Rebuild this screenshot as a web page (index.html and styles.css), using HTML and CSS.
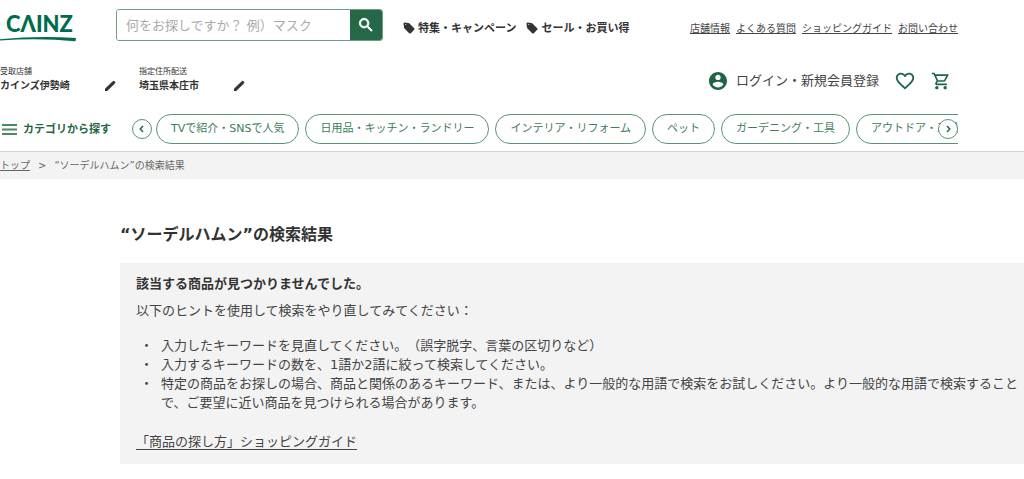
FILE: index.html
```html
<!DOCTYPE html>
<html lang="ja">
<head>
<meta charset="utf-8">
<meta name="viewport" content="width=device-width, initial-scale=1">
<title>“ソーデルハムン”の検索結果 | CAINZ</title>
<link rel="stylesheet" href="styles.css">
</head>
<body>
<header class="header">
  <div class="top-row">
    <a class="logo" href="#" aria-label="CAINZ">
      <svg viewBox="0 0 76 38" width="76" height="38" aria-hidden="true">
        <text class="logo-text" x="6" y="26">CΛINZ</text>
        <path d="M0 33.300Q38 29.500 76 32L75.500 35.300Q38 31.500 0 34.600Z"/>
      </svg>
    </a>
    <form class="search" role="search">
      <input class="search-input" type="search" aria-label="商品を検索" placeholder="何をお探しですか？ 例）マスク">
      <button class="search-button" type="button" aria-label="検索">
        <svg viewBox="0 0 24 24" width="18" height="18" aria-hidden="true"><path d="M15.500 14h-.79l-.28-.27A6.471 6.471 0 0 0 16 9.500 6.500 6.500 0 1 0 9.500 16c1.610 0 3.090-.59 4.230-1.570l.27.28v.79l5 4.990L20.490 19l-4.990-5zm-6 0C7.010 14 5 11.990 5 9.500S7.010 5 9.500 5 14 7.010 14 9.500 11.990 14 9.500 14z"/></svg>
      </button>
    </form>
    <nav class="promo" aria-label="特集">
      <a class="promo-link" href="#"><svg viewBox="0 0 12 12" width="12" height="12" aria-hidden="true"><path fill-rule="evenodd" d="M1.500.5 5.500 1Q6 1 6.500 1.500L11.200 6.200Q11.900 7 11.200 7.700L7.800 11.200Q7 11.900 6.200 11.200L1.500 6.500Q1 6 1 5.500L.5 1.500Q.5.5 1.500.5ZM2.800 2a.5.5 0 1 0 .01 0Z"/></svg>特集・キャンペーン</a>
      <a class="promo-link" href="#"><svg viewBox="0 0 12 12" width="12" height="12" aria-hidden="true"><path fill-rule="evenodd" d="M1.500.5 5.500 1Q6 1 6.500 1.500L11.200 6.200Q11.900 7 11.200 7.700L7.800 11.200Q7 11.900 6.200 11.200L1.500 6.500Q1 6 1 5.500L.5 1.500Q.5.5 1.500.5ZM2.800 2a.5.5 0 1 0 .01 0Z"/></svg>セール・お買い得</a>
    </nav>
    <nav class="utility" aria-label="サポート">
      <a href="#">店舗情報</a>
      <a href="#">よくある質問</a>
      <a href="#">ショッピングガイド</a>
      <a href="#">お問い合わせ</a>
    </nav>
  </div>

  <div class="store-row">
    <div class="store">
      <div>
        <p class="store-label">受取店舗</p>
        <p class="store-name">カインズ伊勢崎</p>
      </div>
      <button class="icon-button" type="button" aria-label="受取店舗を変更"><svg viewBox="0 0 12 12" width="12" height="12" aria-hidden="true"><path d="M1 8.700 7.700 2.300 9.900 4.400 3.200 10.900H1ZM7.700 2.300 9.200 1Q9.700.6 10.200 1L11.200 2Q11.600 2.500 11.200 3L9.900 4.400Z"/></svg></button>
    </div>
    <div class="store">
      <div>
        <p class="store-label">指定住所配送</p>
        <p class="store-name">埼玉県本庄市</p>
      </div>
      <button class="icon-button" type="button" aria-label="配送先を変更"><svg viewBox="0 0 12 12" width="12" height="12" aria-hidden="true"><path d="M1 8.700 7.700 2.300 9.900 4.400 3.200 10.900H1ZM7.700 2.300 9.200 1Q9.700.6 10.200 1L11.200 2Q11.600 2.500 11.200 3L9.900 4.400Z"/></svg></button>
    </div>
    <div class="account">
      <a class="login" href="#"><svg viewBox="2 2 20 20" width="18" height="18" aria-hidden="true"><path d="M12 2C6.480 2 2 6.480 2 12s4.480 10 10 10 10-4.480 10-10S17.520 2 12 2zm0 3c1.660 0 3 1.340 3 3s-1.340 3-3 3-3-1.340-3-3 1.340-3 3-3zm0 14.200c-2.500 0-4.710-1.280-6-3.220.03-1.990 4-3.080 6-3.080 1.990 0 5.970 1.090 6 3.080-1.290 1.940-3.500 3.220-6 3.220z"/></svg>ログイン・新規会員登録</a>
      <a class="icon-link" href="#" aria-label="お気に入り"><svg viewBox="0 0 24 24" width="22" height="22" aria-hidden="true"><path d="M16.500 3c-1.740 0-3.410.81-4.500 2.090C10.910 3.810 9.240 3 7.500 3 4.420 3 2 5.420 2 8.500c0 3.780 3.400 6.860 8.550 11.540L12 21.350l1.450-1.320C18.600 15.360 22 12.280 22 8.500 22 5.420 19.580 3 16.500 3zm-4.400 15.550-.1.1-.1-.1C7.140 14.240 4 11.390 4 8.500 4 6.500 5.500 5 7.500 5c1.540 0 3.040.99 3.570 2.360h1.870C13.460 5.990 14.960 5 16.500 5c2 0 3.500 1.500 3.500 3.500 0 2.890-3.140 5.740-7.900 10.050z"/></svg></a>
      <a class="icon-link" href="#" aria-label="カート"><svg viewBox="0 0 24 24" width="20" height="20" aria-hidden="true"><path d="M15.550 13c.75 0 1.410-.41 1.750-1.030l3.580-6.490A.996.996 0 0 0 20.010 4H5.210l-.94-2H1v2h2l3.600 7.590-1.350 2.440C4.520 15.370 5.480 17 7 17h12v-2H7l1.100-2h7.450zM6.160 6h12.150l-2.760 5H8.530L6.160 6zM7 18c-1.100 0-1.990.9-1.990 2S5.900 22 7 22s2-.9 2-2-.9-2-2-2zm10 0c-1.100 0-1.990.9-1.990 2s.89 2 1.990 2 2-.9 2-2-.9-2-2-2z"/></svg></a>
    </div>
  </div>

  <div class="category-row">
    <button class="category-menu" type="button"><svg viewBox="0 0 15 11" width="15" height="11" aria-hidden="true"><path d="M0 0h15v2H0ZM0 4.500h15v2H0ZM0 9h15v2H0Z"/></svg>カテゴリから探す</button>
    <div class="carousel">
      <button class="arrow" type="button" aria-label="前へ"><svg viewBox="0 0 8 8" width="8" height="8" aria-hidden="true"><path d="M5 1 2.200 4 5 7"/></svg></button>
      <nav class="pills" aria-label="カテゴリ">
        <a class="pill" href="#">TVで紹介・SNSで人気</a>
        <a class="pill" href="#">日用品・キッチン・ランドリー</a>
        <a class="pill" href="#">インテリア・リフォーム</a>
        <a class="pill" href="#">ペット</a>
        <a class="pill" href="#">ガーデニング・工具</a>
        <a class="pill" href="#">アウトドア・工具</a>
      </nav>
      <button class="arrow arrow-next" type="button" aria-label="次へ"><svg viewBox="0 0 8 8" width="8" height="8" aria-hidden="true"><path d="M3 1 5.800 4 3 7"/></svg></button>
    </div>
  </div>
</header>

<nav class="breadcrumb" aria-label="パンくず">
  <a href="#">トップ</a>
  <span>&gt;</span>
  <span>“ソーデルハムン”の検索結果</span>
</nav>

<main class="main">
  <h1 class="title">“ソーデルハムン”の検索結果</h1>
  <section class="notice">
    <h2 class="notice-title">該当する商品が見つかりませんでした。</h2>
    <p class="notice-lead">以下のヒントを使用して検索をやり直してみてください：</p>
    <ul class="hints">
      <li>入力したキーワードを見直してください。（誤字脱字、言葉の区切りなど）</li>
      <li>入力するキーワードの数を、1語か2語に絞って検索してください。</li>
      <li>特定の商品をお探しの場合、商品と関係のあるキーワード、または、より一般的な用語で検索をお試しください。より一般的な用語で検索することで、ご要望に近い商品を見つけられる場合があります。</li>
    </ul>
    <a class="guide-link" href="#">「商品の探し方」ショッピングガイド</a>
  </section>
</main>
</body>
</html>
```

FILE: styles.css
```css
* {
  box-sizing: border-box;
}

body {
  margin: 0;
  background: #fff;
  color: #333;
  font-family: "DejaVu Sans", "Noto Sans CJK JP", sans-serif;
  font-size: 13px;
  line-height: 19px;
  text-spacing-trim: space-all;
}

p, h1, h2, ul {
  margin: 0;
  padding: 0;
}

a {
  color: inherit;
}

svg {
  display: block;
  flex: none;
  fill: currentColor;
}

button {
  display: flex;
  align-items: center;
  justify-content: center;
  padding: 0;
  border: 0;
  background: none;
  color: inherit;
  font: inherit;
  cursor: pointer;
}

.header {
  padding: 6px 66px 7px 0;
  border-bottom: 1px solid #d4d4d4;
}

.top-row {
  display: flex;
  align-items: center;
}

.logo {
  margin-right: 40px;
  color: #006c4b;
}

.logo-text {
  font-family: Lato, sans-serif;
  font-size: 22px;
  font-weight: 900;
}

.search {
  display: flex;
  width: 267px;
  height: 32px;
  border: 1px solid #6c9f84;
  border-radius: 3px;
  overflow: hidden;
}

.search-input {
  flex: 1;
  min-width: 0;
  padding: 0 9px;
  border: 0;
  background: #fff;
  font: inherit;
}

.search-input::placeholder {
  color: #aaa;
}

.search-button {
  width: 32px;
  background: #266747;
  color: #fff;
}

.search-button svg {
  stroke: currentColor;
}

.promo {
  display: flex;
  gap: 10px;
  margin-left: 20px;
  padding-top: 6px;
}

.promo-link {
  display: flex;
  align-items: center;
  gap: 3px;
  font-size: 11px;
  font-weight: 700;
  text-decoration: none;
  white-space: nowrap;
}

.utility {
  display: flex;
  gap: 6px;
  margin-left: auto;
  padding-top: 7px;
  color: #444;
  font-size: 10px;
  white-space: nowrap;
}

.store-row {
  display: flex;
  align-items: center;
  margin-top: 21px;
}

.store {
  display: flex;
  align-items: flex-end;
  justify-content: space-between;
  width: 116px;
  margin-right: 23px;
}

.store + .store {
  width: 106px;
}

.store-label {
  font-size: 8px;
  line-height: 14px;
}

.store-name {
  font-size: 10px;
  font-weight: 700;
  line-height: 13px;
}

.account {
  display: flex;
  align-items: center;
  margin-left: auto;
  padding: 4px 7px 0 0;
}

.login {
  display: flex;
  align-items: center;
  gap: 9px;
  color: #444;
  text-decoration: none;
}

.login svg,
.icon-link {
  color: #1f6545;
}

.icon-link {
  margin-left: 15px;
}

.category-row {
  display: flex;
  align-items: center;
  margin-top: 22px;
  color: #266747;
}

.category-menu {
  flex: none;
  gap: 6px;
  margin: 0 21px 0 2px;
  font-size: 11px;
  font-weight: 700;
}

.category-menu svg {
  color: #4a8868;
}

.carousel {
  position: relative;
  display: flex;
  flex: 1;
  align-items: center;
  gap: 4px;
  min-width: 0;
}

.arrow {
  flex: none;
  width: 20px;
  height: 20px;
  border: 1px solid #5c9377;
  border-radius: 50%;
  background: #fff;
}

.arrow svg {
  fill: none;
  stroke: currentColor;
  stroke-width: 1.5;
}

.arrow-next {
  position: absolute;
  right: 0;
}

.pills {
  display: flex;
  flex: 1;
  gap: 6px;
  min-width: 0;
  overflow: hidden;
}

.pill {
  flex: none;
  padding: 4px 14px 5px;
  border: 1px solid #5c9377;
  border-radius: 15px;
  color: #3c7d5b;
  font-size: 11px;
  text-decoration: none;
  white-space: nowrap;
}

.breadcrumb {
  display: flex;
  gap: 8px;
  padding: 4px 0;
  background: #f3f3f3;
  color: #666;
  font-size: 10px;
}

.main {
  margin: 44px 0 14px 120px;
}

.title {
  font-size: 16px;
  line-height: 24px;
}

.notice {
  margin-top: 16px;
  padding: 11px 4px 13px 16px;
  background: #f3f3f3;
}

.notice-title {
  font-size: 13px;
}

.notice-lead {
  margin-top: 8px;
  color: #444;
}

.hints {
  margin: 16px 0 20px;
  color: #444;
  list-style: none;
}

.hints li {
  display: flex;
}

.hints li::before {
  content: "・";
  flex: none;
  width: 21px;
  padding-left: 4px;
}

.guide-link {
  display: block;
  width: fit-content;
  color: #444;
  text-underline-offset: 3px;
}
```
